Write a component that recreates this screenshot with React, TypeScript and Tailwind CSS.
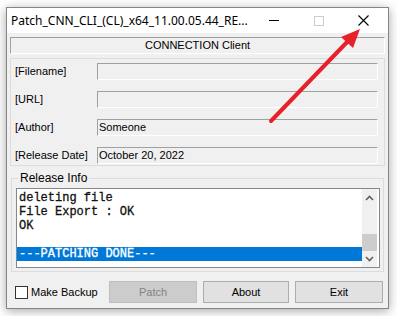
import React from "react";

const sans = { fontFamily: '"Liberation Sans", Arial, sans-serif' };

function Field({ label, value }: { label: string; value?: string }) {
  return (
    <div className="flex items-center h-[17px]">
      <div className="w-[82px] text-[11px] text-black leading-none">{label}</div>
      <div className="w-[281px] h-[17px] border-t border-l border-[#a0a0a0] border-b border-b-white border-r border-r-white bg-[#f0f0f0] flex items-center pl-[1px] text-[11px] text-black leading-none">
        {value}
      </div>
    </div>
  );
}

export default function App() {
  return (
    <div
      className="relative w-[397px] h-[316px] bg-white overflow-hidden pt-[7px] pl-[6px]"
      style={sans}
    >
      <div className="w-[383px] h-[302px] border border-[#858585] shadow-[0_2px_10px_rgba(0,0,0,0.35)] flex flex-col">
        {/* title bar */}
        <div className="h-[25px] bg-white flex items-center shrink-0">
          <div
            className="pl-[4px] w-[244px] text-[12px] text-black whitespace-nowrap"
            style={{ fontFamily: '"Noto Sans", "Open Sans", sans-serif' }}
          >
            Patch_CNN_CLI_(CL)_x64_11.00.05.44_RE...
          </div>
          <div className="w-[45px] h-[25px] flex items-center justify-center">
            <div className="w-[10px] h-px bg-black" />
          </div>
          <div className="w-[45px] h-[25px] flex items-center justify-center">
            <div className="w-[10px] h-[10px] border border-[#cccccc]" />
          </div>
          <div className="w-[45px] h-[25px] flex items-center justify-center">
            <svg width="11" height="11" viewBox="0 0 11 11">
              <path d="M0.5 0.5 L10.5 10.5 M10.5 0.5 L0.5 10.5" stroke="#000" strokeWidth="1.1" />
            </svg>
          </div>
        </div>

        {/* content */}
        <div className="flex-1 bg-[#f0f0f0] px-[3px] pt-[4px] flex flex-col">
          <div className="h-[17px] border-t border-l border-[#a0a0a0] border-b border-b-white border-r border-r-white flex items-center justify-center text-[11px] text-black leading-none">
            CONNECTION Client
          </div>

          <div className="mt-[4px] h-[108px] border border-[#dcdcdc] pl-[4px] pt-[4px] flex flex-col gap-[11px]">
            <Field label="[Filename]" />
            <Field label="[URL]" />
            <Field label="[Author]" value="Someone" />
            <Field label="[Release Date]" value="October 20, 2022" />
          </div>

          <div className="relative mt-[12px] mx-[1px] border border-[#dcdcdc] pl-[4px] pr-[3px] pt-[9px] pb-[3px]">
            <div className="absolute left-[6px] top-[-7px] bg-[#f0f0f0] px-[2px] text-[12px] text-black leading-none">
              Release Info
            </div>
            <div className="h-[80px] border border-[#828790] bg-white flex">
              <div
                className="flex-1 pt-[2px] text-[12px] leading-[14px] text-[#111111] [-webkit-text-stroke:0.3px_#111111]"
                style={{ fontFamily: '"Liberation Mono", "Courier New", monospace' }}
              >
                <div className="pl-[2px]">deleting file</div>
                <div className="pl-[2px]">File Export : OK</div>
                <div className="pl-[2px]">OK</div>
                <div className="pl-[2px] h-[14px]"></div>
                <div className="pl-[2px] bg-[#0078d7] text-white [-webkit-text-stroke:0.3px_#ffffff]">---PATCHING DONE---</div>
              </div>
              <div className="w-[15px] bg-[#f0f0f0] mr-[2px] flex flex-col items-center">
                <div className="h-[16px] flex items-center justify-center mt-[1px]">
                  <svg width="9" height="6" viewBox="0 0 9 6">
                    <path d="M1 5 L4.5 1.5 L8 5" stroke="#606060" strokeWidth="1.6" fill="none" />
                  </svg>
                </div>
                <div className="flex-1" />
                <div className="w-[15px] h-[17px] bg-[#cdcdcd]" />
                <div className="h-[16px] flex items-center justify-center">
                  <svg width="9" height="6" viewBox="0 0 9 6">
                    <path d="M1 1 L4.5 4.5 L8 1" stroke="#606060" strokeWidth="1.6" fill="none" />
                  </svg>
                </div>
              </div>
            </div>
          </div>

          <div className="mt-[9px] h-[22px] flex items-center">
            <div className="ml-[5px] w-[13px] h-[13px] border border-[#333333] bg-white" />
            <div className="ml-[3px] w-[78px] text-[11px] text-black leading-none">Make Backup</div>
            <div className="w-[88px] h-[22px] border border-[#bfbfbf] bg-[#cccccc] flex items-center justify-center text-[11px] text-[#838383]">
              Patch
            </div>
            <div className="ml-[6px] w-[86px] h-[22px] border border-[#adadad] bg-[#e1e1e1] flex items-center justify-center text-[11px] text-black">
              About
            </div>
            <div className="ml-[6px] w-[88px] h-[22px] border border-[#adadad] bg-[#e1e1e1] flex items-center justify-center text-[11px] text-black">
              Exit
            </div>
          </div>
        </div>
      </div>

      {/* red annotation arrow */}
      <svg className="absolute left-0 top-0" width="397" height="316" viewBox="0 0 397 316">
        <line x1="271" y1="121" x2="350" y2="39" stroke="#e8202a" strokeWidth="4" strokeLinecap="round" />
        <polygon points="360,29 353,48 341,37" fill="#e8202a" />
      </svg>
    </div>
  );
}
